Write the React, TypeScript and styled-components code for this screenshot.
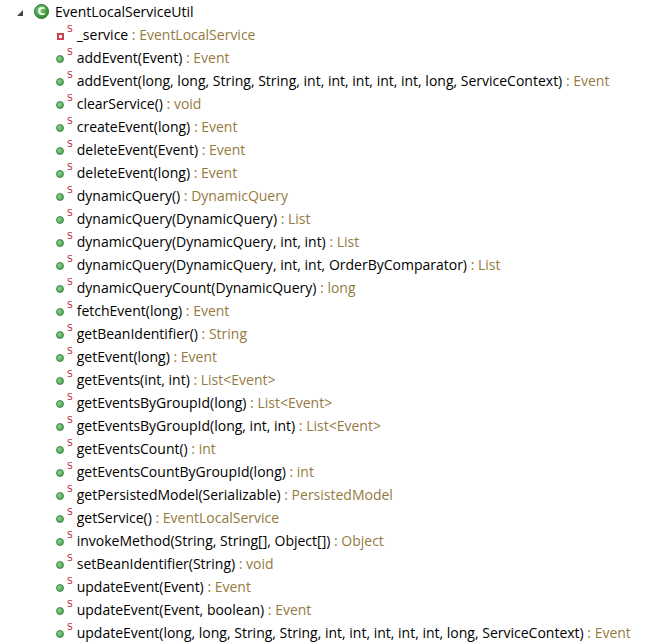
import React from 'react';
import styled, { createGlobalStyle } from 'styled-components';

const Global = createGlobalStyle`
  body { margin: 0; background: #fff; font-family: "Open Sans", "Noto Sans", sans-serif; }
`;

const Tree = styled.div`
  padding-top: 0;
  font-size: 14px;
  color: #000;
`;

const Row = styled.div<{ indent: number }>`
  display: flex;
  align-items: center;
  height: 23px;
  padding-left: ${({ indent }) => indent}px;
  white-space: nowrap;
`;

const Arrow = styled.span`
  width: 0;
  height: 0;
  border-left: 6px solid transparent;
  border-bottom: 6px solid #444;
  margin-right: 11px;
  margin-top: 2px;
`;

const Dot = styled.span<{ kind: 'public' | 'private' }>`
  display: inline-block;
  box-sizing: border-box;
  width: ${({ kind }) => (kind === 'public' ? 8 : 7)}px;
  height: ${({ kind }) => (kind === 'public' ? 8 : 7)}px;
  border-radius: ${({ kind }) => (kind === 'public' ? '50%' : '0')};
  background: ${({ kind }) =>
    kind === 'public' ? 'radial-gradient(circle at 35% 35%, #8fd08f, #3f9a4a)' : '#fff'};
  border: ${({ kind }) => (kind === 'public' ? '1px solid #3a8a44' : '2px solid #d0404f')};
  margin-top: 3px;
`;

const Static = styled.span`
  font-size: 9px;
  color: #c0283c;
  align-self: flex-start;
  margin: 1px 4px 0 3px;
  font-family: "DejaVu Sans", sans-serif;
`;

const Name = styled.span``;

const Type = styled.span`
  color: #957a3f;
`;

const ClassIcon = () => (
  <svg width="15" height="15" viewBox="0 0 15 15" style={{ marginRight: 6 }}>
    <defs>
      <radialGradient id="g" cx="40%" cy="35%" r="65%">
        <stop offset="0" stopColor="#7fd07a" />
        <stop offset="1" stopColor="#2f8a33" />
      </radialGradient>
    </defs>
    <circle cx="7.5" cy="7.5" r="7" fill="url(#g)" stroke="#2a7a2e" />
    <text x="7.5" y="11.2" textAnchor="middle" fontSize="10" fontWeight="bold" fill="#fff" fontFamily="DejaVu Sans, sans-serif">C</text>
  </svg>
);

const members: [string, string, boolean?][] = [
  ['_service', 'EventLocalService', true],
  ['addEvent(Event)', 'Event'],
  ['addEvent(long, long, String, String, int, int, int, int, int, long, ServiceContext)', 'Event'],
  ['clearService()', 'void'],
  ['createEvent(long)', 'Event'],
  ['deleteEvent(Event)', 'Event'],
  ['deleteEvent(long)', 'Event'],
  ['dynamicQuery()', 'DynamicQuery'],
  ['dynamicQuery(DynamicQuery)', 'List'],
  ['dynamicQuery(DynamicQuery, int, int)', 'List'],
  ['dynamicQuery(DynamicQuery, int, int, OrderByComparator)', 'List'],
  ['dynamicQueryCount(DynamicQuery)', 'long'],
  ['fetchEvent(long)', 'Event'],
  ['getBeanIdentifier()', 'String'],
  ['getEvent(long)', 'Event'],
  ['getEvents(int, int)', 'List<Event>'],
  ['getEventsByGroupId(long)', 'List<Event>'],
  ['getEventsByGroupId(long, int, int)', 'List<Event>'],
  ['getEventsCount()', 'int'],
  ['getEventsCountByGroupId(long)', 'int'],
  ['getPersistedModel(Serializable)', 'PersistedModel'],
  ['getService()', 'EventLocalService'],
  ['invokeMethod(String, String[], Object[])', 'Object'],
  ['setBeanIdentifier(String)', 'void'],
  ['updateEvent(Event)', 'Event'],
  ['updateEvent(Event, boolean)', 'Event'],
  ['updateEvent(long, long, String, String, int, int, int, int, int, long, ServiceContext)', 'Event'],
];

export default function App() {
  return (
    <>
      <Global />
      <Tree>
        <Row indent={17}>
          <Arrow />
          <ClassIcon />
          <Name>EventLocalServiceUtil</Name>
        </Row>
        {members.map(([name, type, priv]) => (
          <Row indent={priv ? 57 : 56} key={name}>
            <Dot kind={priv ? 'private' : 'public'} />
            <Static>S</Static>
            <Name>{name}</Name>
            <Type>&nbsp;: {type}</Type>
          </Row>
        ))}
      </Tree>
    </>
  );
}
